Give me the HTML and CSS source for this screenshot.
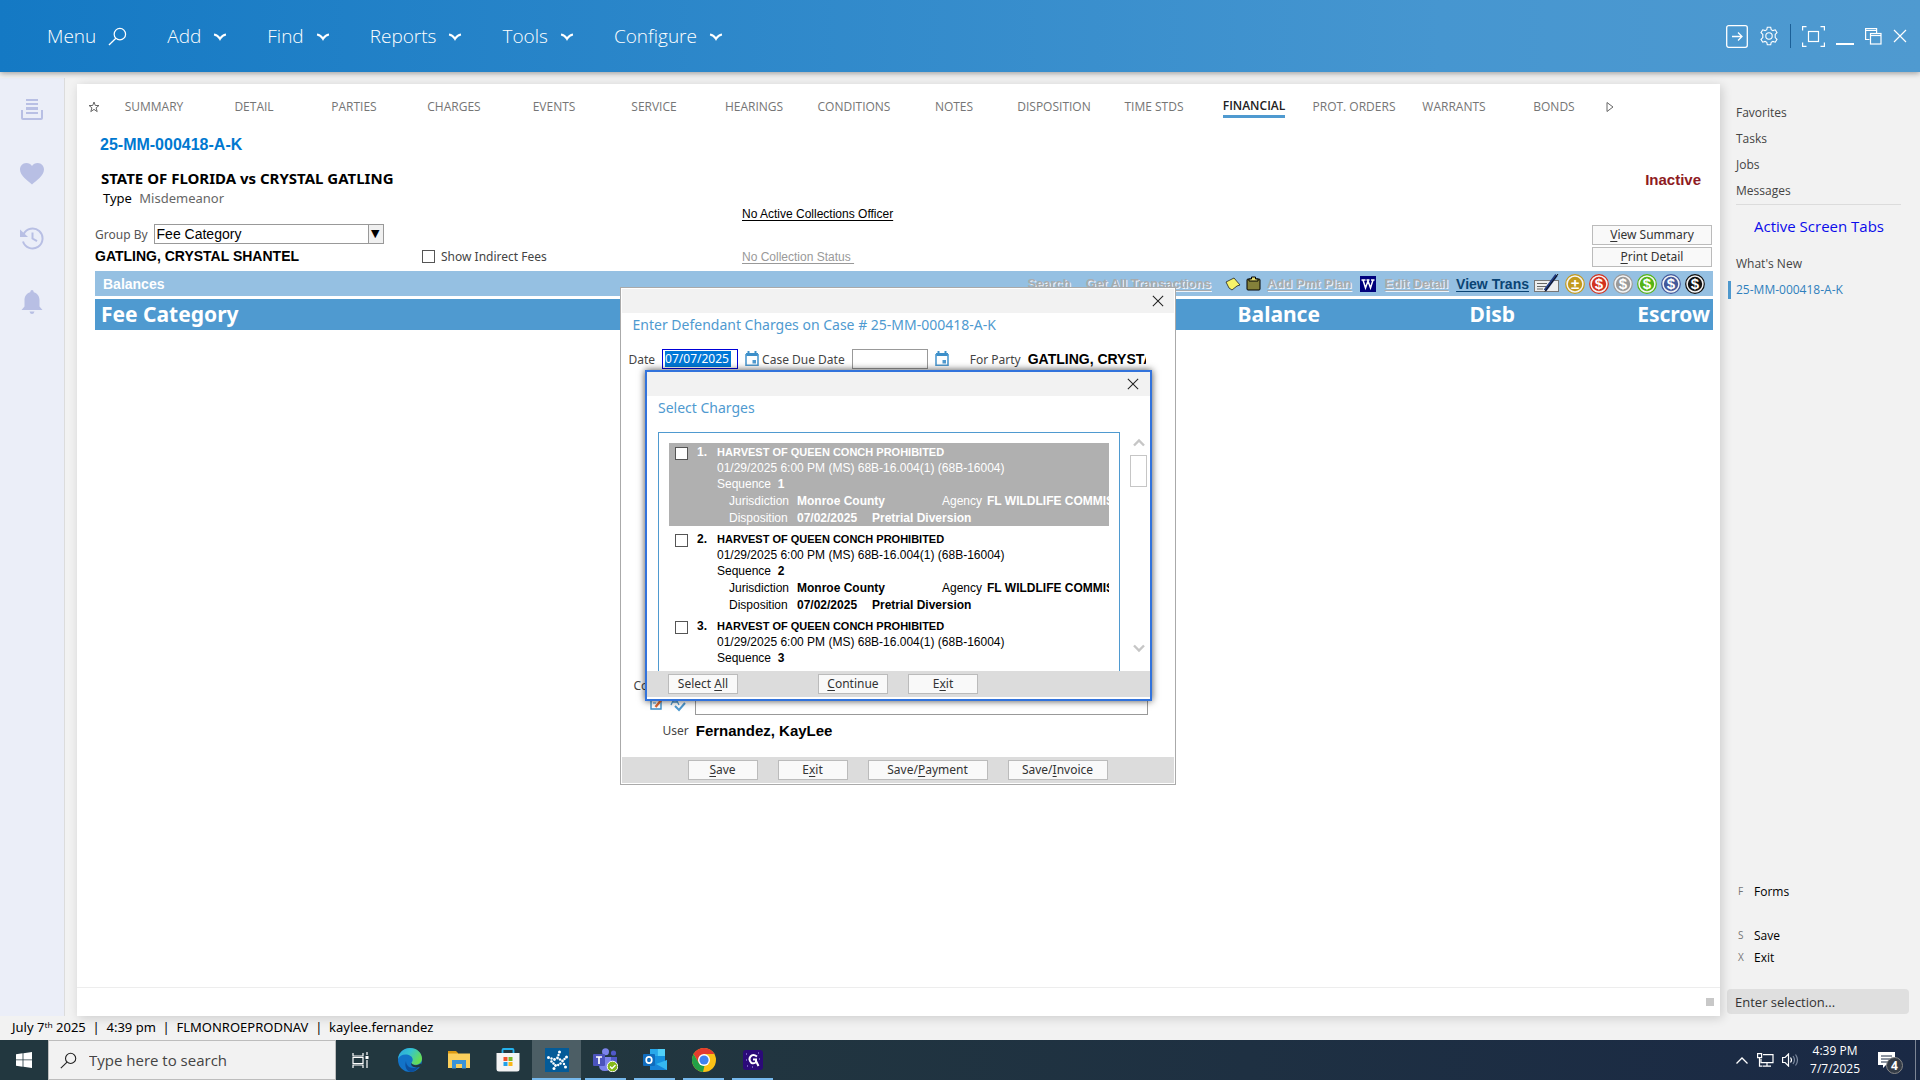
FILE: index.html
```html
<!DOCTYPE html>
<html lang="en">
<head>
    <meta charset="UTF-8">
    <meta name="viewport" content="width=device-width, initial-scale=1.0">
    <title>25-MM-000418-A-K - Financial</title>
    <link rel="stylesheet" href="styles.css">
</head>
<body>
    <!-- Shared icon shapes -->
    <svg class="sprite" aria-hidden="true">
        <symbol id="chevron" viewBox="0 0 14 14"><path d="M1 5.500c2.500.3 4.500 1.800 6 4.300c1.500-2.500 3.500-4 6-4.300" fill="none" stroke="currentColor" stroke-width="2.200"/></symbol>
        <symbol id="close" viewBox="0 0 14 14"><path d="M1 1l12 12M13 1L1 13" fill="none" stroke="currentColor" stroke-width="1.200"/></symbol>
        <symbol id="search" viewBox="0 0 20 20"><circle cx="12.500" cy="7.500" r="6" fill="none" stroke="currentColor" stroke-width="1.300"/><path d="M8.300 11.800L1 19" stroke="currentColor" stroke-width="1.300"/></symbol>
        <symbol id="calendar" viewBox="0 0 14 16"><path d="M1 2h12v3H1zM2.500 0h2v3h-2zM9.500 0h2v3h-2z" fill="#3d8fc9"/><path d="M1 3v11.200h12V3" fill="none" stroke="#4f9ad0" stroke-width="1.600"/><path d="M7.500 9h3.500v3.500H7.500z" fill="#4f9ad0"/></symbol>
        <symbol id="coin" viewBox="0 0 20 20"><circle cx="10" cy="10" r="9.300" fill="#f4f4f4" stroke="currentColor" stroke-width="1.200"/><circle cx="10" cy="10" r="7.200" fill="currentColor"/></symbol>
    </svg>

    <header class="topbar">
        <nav class="topmenu">
            <button class="menu-item">Menu <svg class="search-icon"><use href="#search"/></svg></button>
            <button class="menu-item">Add <svg class="chev"><use href="#chevron"/></svg></button>
            <button class="menu-item">Find <svg class="chev"><use href="#chevron"/></svg></button>
            <button class="menu-item">Reports <svg class="chev"><use href="#chevron"/></svg></button>
            <button class="menu-item">Tools <svg class="chev"><use href="#chevron"/></svg></button>
            <button class="menu-item">Configure <svg class="chev"><use href="#chevron"/></svg></button>
        </nav>
        <div class="window-tools">
            <button aria-label="Log out"><svg width="22" height="23" viewBox="0 0 22 23" fill="none" stroke="#fff" stroke-width="1.300"><rect x="0.700" y="0.700" width="20.600" height="21.600" rx="2"/><path d="M6 11.500h10M12 7.500l4 4l-4 4"/></svg></button>
            <button aria-label="Settings"><svg width="20" height="20" viewBox="0 0 20 20" fill="none" stroke="#fff" stroke-width="1.100"><circle cx="10" cy="10" r="3.200"/><path d="M8.300 1.200h3.400l.5 2.400l1.700 1l2.400-.8l1.700 2.900l-1.800 1.700v3.200l1.800 1.700l-1.700 2.900l-2.400-.8l-1.700 1l-.5 2.400H8.300l-.5-2.400l-1.700-1l-2.400.8L2 13.300l1.800-1.700V8.400L2 6.700l1.700-2.900l2.400.8l1.700-1z"/></svg></button>
            <span class="tool-divider"></span>
            <button aria-label="Focus mode"><svg width="23" height="21" viewBox="0 0 23 21" fill="none" stroke="#fff" stroke-width="1.200"><path d="M4.500.6H.6v4M18.500.6h3.900v4M.6 16.500v3.900h3.900M22.400 16.500v3.900h-3.900"/><rect x="6.500" y="5.500" width="10" height="10"/></svg></button>
            <button aria-label="Minimize"><svg width="18" height="20" viewBox="0 0 18 20"><path d="M0 18h18" stroke="#fff" stroke-width="2"/></svg></button>
            <button aria-label="Restore"><svg width="17" height="18" viewBox="0 0 17 18" fill="none" stroke="#fff" stroke-width="1.200"><path d="M4.500 12.500H.6V1.600h11V6M.6 3.500h11"/><rect x="5.500" y="6.500" width="10.500" height="10.500"/><path d="M5.500 8.500H16"/></svg></button>
            <button aria-label="Close"><svg class="close-icon"><use href="#close"/></svg></button>
        </div>
    </header>

    <div class="workspace">
        <aside class="rail">
            <button aria-label="Trays"><svg width="24" height="24" viewBox="0 0 24 24" fill="#b8bfe4"><path d="M6 1h12v2H6zM6 5h12v2H6zM6 9h12v3H6zM6 14h12v2H6z"/><path d="M1 12h2v8h18v-8h2v8q0 2-2 2H3q-2 0-2-2z"/></svg></button>
            <button aria-label="Favorites"><svg width="24" height="24" viewBox="0 0 24 24" fill="#b8bfe4"><path d="M12 22.500C8 19 0 13.500 0 7.500C0 4 2.500 1 6.300 1C8.700 1 10.900 2.200 12 4C13.100 2.200 15.300 1 17.700 1C21.500 1 24 4 24 7.500C24 13.500 16 19 12 22.500z"/></svg></button>
            <button aria-label="History"><svg width="24" height="24" viewBox="0 0 24 24" fill="none" stroke="#b8bfe4" stroke-width="2"><path d="M3.600 8A10 10 0 1 1 3 15.500M12.500 6.500v6l4.500 2.700"/><path d="M0 3.500l8 7.500H0z" fill="#b8bfe4" stroke="none"/></svg></button>
            <button aria-label="Alerts"><svg width="24" height="24" viewBox="0 0 24 24" fill="#b8bfe4"><path d="M12 0q1.500 0 1.800 2.200C18 3.500 19.500 7 19.500 10v6.500L22.500 20H1.500L4.500 16.500V10c0-3 1.500-6.500 5.700-7.800Q10.500 0 12 0zM9.500 21.500h5q-.6 2.500-2.500 2.500t-2.500-2.500z"/></svg></button>
        </aside>

        <main class="panel">
            <nav class="tabs">
                <button class="star" aria-label="Add to favorites"><svg width="12" height="12" viewBox="0 0 12 12" fill="none" stroke="#666"><path d="M6 1l1.300 3.500H11L8.100 6.800L9.200 10.600L6 8.400L2.800 10.600L3.900 6.800L1 4.500h3.700z"/></svg></button>
                <a href="#">SUMMARY</a>
                <a href="#">DETAIL</a>
                <a href="#">PARTIES</a>
                <a href="#">CHARGES</a>
                <a href="#">EVENTS</a>
                <a href="#">SERVICE</a>
                <a href="#">HEARINGS</a>
                <a href="#">CONDITIONS</a>
                <a href="#">NOTES</a>
                <a href="#">DISPOSITION</a>
                <a href="#">TIME STDS</a>
                <a href="#" class="active"><span>FINANCIAL</span></a>
                <a href="#">PROT. ORDERS</a>
                <a href="#">WARRANTS</a>
                <a href="#">BONDS</a>
                <button class="more" aria-label="More tabs"><svg width="8" height="12" viewBox="0 0 8 12"><path d="M1 1.500l6 4.500l-6 4.500z" fill="none" stroke="#666"/></svg></button>
            </nav>

            <section class="case">
                <h1>25-MM-000418-A-K</h1>
                <div class="style-row">
                    <h2>STATE OF FLORIDA vs CRYSTAL GATLING</h2>
                    <strong class="status">Inactive</strong>
                </div>
                <p class="type">Type <span>Misdemeanor</span></p>
                <div class="filters">
                    <div class="filters-left">
                        <div class="group-by">
                            <label for="groupBy">Group By</label>
                            <select id="groupBy"><option>Fee Category</option></select>
                        </div>
                        <div class="party-row">
                            <strong>GATLING, CRYSTAL SHANTEL</strong>
                            <label class="indirect"><input type="checkbox" class="tick"> Show Indirect Fees</label>
                        </div>
                    </div>
                    <div class="collections">
                        <a href="#">No Active Collections Officer</a>
                        <a href="#" class="muted">No Collection Status&nbsp;</a>
                    </div>
                    <div class="side-buttons">
                        <button class="btn"><u>V</u>iew Summary</button>
                        <button class="btn"><u>P</u>rint Detail</button>
                    </div>
                </div>

                <div class="balances">
                    <strong>Balances</strong>
                    <div class="actions">
                        <a href="#" class="off">Search</a>
                        <a href="#" class="off wide">Get All Transactions</a>
                        <svg width="16" height="14" viewBox="0 0 16 14"><path d="M1 5L9 1l6 7l-3 1l-5 4l-3-2z" fill="#f7f36a" stroke="#222" stroke-width=".8"/></svg>
                        <svg width="16" height="15" viewBox="0 0 16 15"><rect x="1" y="3" width="13" height="11" rx="1" fill="#84803a" stroke="#000"/><path d="M3 5V3h2.500V1h4v2H12v2z" fill="#e8e070" stroke="#000"/></svg>
                        <a href="#" class="off">Add Pmt Plan</a>
                        <svg class="word" width="16" height="16" viewBox="0 0 16 16"><rect width="16" height="16" fill="#00007b"/><path d="M1.500 4h4M6.500 4h3M11 4h3.500M3 4l2.500 8L8 5l2.500 7L13 4" fill="none" stroke="#fff" stroke-width="1.500"/></svg>
                        <a href="#" class="off">Edit Detail</a>
                        <a href="#" class="on">View Trans</a>
                        <svg class="check" width="26" height="20" viewBox="0 0 26 20"><rect x=".5" y="6.500" width="24" height="11" fill="#eee" stroke="#777"/><path d="M3 9.500h10M3 12.500h9M3 15h6" stroke="#666"/><path d="M22.500 1L11 16.500" stroke="#203a80" stroke-width="3"/><path d="M24 0L11 17.500" stroke="#111" stroke-width="1"/></svg>
                        <span class="coin gold"><svg><use href="#coin"/></svg><b>±</b></span>
                        <span class="coin red"><svg><use href="#coin"/></svg><b>$</b></span>
                        <span class="coin grey"><svg><use href="#coin"/></svg><b>$</b></span>
                        <span class="coin green"><svg><use href="#coin"/></svg><b>$</b></span>
                        <span class="coin blue"><svg><use href="#coin"/></svg><b>$</b></span>
                        <span class="coin black"><svg><use href="#coin"/></svg><b>$</b></span>
                    </div>
                </div>
                <table class="fees">
                    <thead>
                        <tr><th>Fee Category</th><th class="num">Balance</th><th class="num">Disb</th><th class="num">Escrow</th></tr>
                    </thead>
                </table>
            </section>

            <div class="panel-foot"><span class="grip"></span></div>

            <!-- Enter charges dialog -->
            <div class="overlay">
                <form class="dialog charges-dialog" role="dialog" aria-label="Enter Defendant Charges">
                    <div class="dialog-bar"><button type="button" aria-label="Close"><svg width="12" height="12"><use href="#close"/></svg></button></div>
                    <h3>Enter Defendant Charges on Case # 25-MM-000418-A-K</h3>
                    <div class="date-row">
                        <label for="chargeDate">Date</label>
                        <span class="date-box focused"><input id="chargeDate" type="text" value="07/07/2025"></span>
                        <svg width="14" height="16"><use href="#calendar"/></svg>
                        <label for="dueDate" class="due">Case Due Date</label>
                        <span class="date-box"><input id="dueDate" type="text"></span>
                        <svg width="14" height="16"><use href="#calendar"/></svg>
                        <span class="for-party">For Party</span>
                        <strong>GATLING, CRYSTAL SHANTEL</strong>
                    </div>
                    <div class="comment-row">
                        <div class="comment-side">
                            <label for="comments">Comments</label>
                            <div class="comment-tools">
                                <svg width="14" height="14" viewBox="0 0 14 14"><path d="M1 1h10v12H1z" fill="#fff" stroke="#3d8fc9" stroke-width="1.400"/><path d="M3 4h5M3 7h3" stroke="#3d8fc9"/><path d="M13 2L5.500 11" stroke="#dd6b35" stroke-width="2.400"/></svg>
                                <svg width="16" height="16" viewBox="0 0 16 16" fill="none" stroke="#4f9ad0"><path d="M1 9l4-8l4 8M2.500 6h5" stroke-width="1.300"/><path d="M5 10l4 4l6-7" stroke-width="2"/></svg>
                            </div>
                        </div>
                        <textarea id="comments"></textarea>
                    </div>
                    <div class="user-row"><span>User</span><strong>Fernandez, KayLee</strong></div>
                    <div class="dialog-foot">
                        <button type="button" class="btn"><u>S</u>ave</button>
                        <button type="button" class="btn">E<u>x</u>it</button>
                        <button type="button" class="btn w120">Save/<u>P</u>ayment</button>
                        <button type="button" class="btn w100">Save/<u>I</u>nvoice</button>
                    </div>
                </form>
            </div>

            <!-- Select charges dialog -->
            <div class="overlay front">
                <form class="dialog select-dialog" role="dialog" aria-label="Select Charges">
                    <div class="dialog-bar"><button type="button" aria-label="Close"><svg width="12" height="12"><use href="#close"/></svg></button></div>
                    <h3>Select Charges</h3>
                    <div class="list-row">
                        <ul class="charge-list">
                            <li class="charge selected">
                                <input type="checkbox" class="tick" id="c1">
                                <b>1.</b>
                                <div class="charge-body">
                                    <label for="c1">HARVEST OF QUEEN CONCH PROHIBITED</label>
                                    <p>01/29/2025 6:00 PM (MS) 68B-16.004(1) (68B-16004)</p>
                                    <p class="sequence">Sequence &nbsp;<b>1</b></p>
                                    <p class="info"><span>Jurisdiction</span><b class="county">Monroe County</b><span>Agency</span><b>FL WILDLIFE COMMISSION</b></p>
                                    <p class="info"><span>Disposition</span><b class="when">07/02/2025</b><b>Pretrial Diversion</b></p>
                                </div>
                            </li>
                            <li class="charge">
                                <input type="checkbox" class="tick" id="c2">
                                <b>2.</b>
                                <div class="charge-body">
                                    <label for="c2">HARVEST OF QUEEN CONCH PROHIBITED</label>
                                    <p>01/29/2025 6:00 PM (MS) 68B-16.004(1) (68B-16004)</p>
                                    <p class="sequence">Sequence &nbsp;<b>2</b></p>
                                    <p class="info"><span>Jurisdiction</span><b class="county">Monroe County</b><span>Agency</span><b>FL WILDLIFE COMMISSION</b></p>
                                    <p class="info"><span>Disposition</span><b class="when">07/02/2025</b><b>Pretrial Diversion</b></p>
                                </div>
                            </li>
                            <li class="charge">
                                <input type="checkbox" class="tick" id="c3">
                                <b>3.</b>
                                <div class="charge-body">
                                    <label for="c3">HARVEST OF QUEEN CONCH PROHIBITED</label>
                                    <p>01/29/2025 6:00 PM (MS) 68B-16.004(1) (68B-16004)</p>
                                    <p class="sequence">Sequence &nbsp;<b>3</b></p>
                                </div>
                            </li>
                        </ul>
                        <div class="scrollbar">
                            <svg width="12" height="9" viewBox="0 0 12 9"><path d="M1 7.500l5-5l5 5" fill="none" stroke="#c6c6c6" stroke-width="2.400"/></svg>
                            <span class="thumb"></span>
                            <svg class="down" width="12" height="9" viewBox="0 0 12 9"><path d="M1 1.500l5 5l5-5" fill="none" stroke="#c6c6c6" stroke-width="2.400"/></svg>
                        </div>
                    </div>
                    <div class="dialog-foot">
                        <button type="button" class="btn first">Select <u>A</u>ll</button>
                        <button type="button" class="btn"><u>C</u>ontinue</button>
                        <button type="button" class="btn">E<u>x</u>it</button>
                    </div>
                </form>
            </div>
        </main>

        <aside class="sidebar">
            <nav class="side-links">
                <a href="#">Favorites</a>
                <a href="#">Tasks</a>
                <a href="#">Jobs</a>
                <a href="#">Messages</a>
            </nav>
            <h2>Active Screen Tabs</h2>
            <nav class="screens">
                <a href="#">What's New</a>
                <a href="#" class="current">25-MM-000418-A-K</a>
            </nav>
            <div class="keys">
                <button class="forms"><span>F</span>Forms</button>
                <button><span>S</span>Save</button>
                <button><span>X</span>Exit</button>
            </div>
            <input type="text" class="selection" placeholder="Enter selection..." aria-label="Enter selection">
        </aside>
    </div>

    <div class="statusbar">July 7ᵗʰ 2025 &nbsp;|&nbsp; 4:39 pm &nbsp;|&nbsp; FLMONROEPRODNAV &nbsp;|&nbsp; kaylee.fernandez</div>

    <footer class="taskbar">
        <button class="start" aria-label="Start"><svg width="16" height="16" viewBox="0 0 16 16" fill="#fff"><path d="M0 2.200L6.600 1.300v6.200H0zM7.400 1.200L16 0v7.500H7.400zM0 8.300h6.600v6.400L0 13.800zM7.400 8.300H16V16l-8.600-1.200z"/></svg></button>
        <label class="task-search">
            <svg width="17" height="17"><use href="#search"/></svg>
            <input type="text" placeholder="Type here to search">
        </label>
        <button class="app" aria-label="Task View"><svg width="17" height="17" viewBox="0 0 17 17" fill="none" stroke="#fff" stroke-width="1.200"><path d="M1 1v3h10V1M1 16v-3h10v3M1 5.500h10v6H1zM15 0v3M15 8v8"/><path d="M13.500 4h3v3h-3z" fill="#fff" stroke="none"/></svg></button>
        <button class="app" aria-label="Edge"><svg width="24" height="24" viewBox="0 0 24 24">
            <defs>
                <linearGradient id="edgeTop" x1="0" y1="0" x2="1" y2=".5"><stop offset="0" stop-color="#2ba3e0"/><stop offset=".5" stop-color="#35c3d0"/><stop offset="1" stop-color="#66dd55"/></linearGradient>
            </defs>
            <circle cx="12" cy="12" r="12" fill="#1273c8"/>
            <path d="M0 11C.5 4.500 6 0 12 0c7 0 12 5 12 10.500c0 4-3 6.300-6.500 6.300c-2.500 0-4-1-4-1.800c0-.7 1.200-1.300 1.200-3.500C14.700 8.500 11 6.500 7.500 6.500C4 6.500 1 8.500 0 11z" fill="url(#edgeTop)"/>
            <path d="M8 13c0 6 6 9 13 5.500C19 22 15.500 24 12.500 24C9 23 6 19 8 13z" fill="#0c4f9d"/>
            <path d="M13.500 15c1 2.500 6 3 9 .5l1.500 2l-2.500 1.500c-5 1.500-9.500-1-8-4z" fill="#22373f"/></svg></button>
        <button class="app" aria-label="File Explorer"><svg width="22" height="20" viewBox="0 0 22 20"><path d="M0 1h8l2 2v3H0z" fill="#dc9a12"/><path d="M0 3.500h22V18H0z" fill="#fbcf5c"/><path d="M4 10h14v8.500h-4V14H8v4.500H4z" fill="#3a93d8"/></svg></button>
        <button class="app" aria-label="Store"><svg width="24" height="24" viewBox="0 0 24 24"><path d="M6.500 6V2q0-1 1-1h9q1 0 1 1v4" fill="none" stroke="#25b2ee" stroke-width="1.800"/><path d="M.5 5h23v16q0 2.500-2.500 2.500H3Q.5 23.500.5 21z" fill="#f4f4f4"/><path d="M7.500 9h4v4h-4z" fill="#f0512a"/><path d="M12.500 9h4v4h-4z" fill="#7db928"/><path d="M7.500 14h4v4h-4z" fill="#20a0e8"/><path d="M12.500 14h4v4h-4z" fill="#fab617"/></svg></button>
        <button class="app open current" aria-label="Case Manager"><svg width="24" height="24" viewBox="0 0 24 24"><rect width="24" height="24" fill="#045b98"/><g fill="#fff"><circle cx="14.500" cy="4" r="1.500"/><circle cx="13.500" cy="7" r="1.200"/><circle cx="12.500" cy="10" r="1.400"/><circle cx="3.500" cy="9.500" r="1.500"/><circle cx="6.500" cy="10.500" r="1.200"/><circle cx="9.500" cy="11.500" r="1.400"/><circle cx="15" cy="11.500" r="1.200"/><circle cx="17.500" cy="13" r="1.400"/><circle cx="19.500" cy="11" r="1.200"/><circle cx="21.500" cy="9" r="1.500"/><circle cx="6.500" cy="13.500" r="1.300"/><circle cx="8.500" cy="15.500" r="1.200"/><circle cx="10.500" cy="17.500" r="1.400"/><circle cx="9" cy="20.500" r="1.500"/><circle cx="15.500" cy="15.500" r="1.200"/><circle cx="13.200" cy="17" r="1.200"/><circle cx="19" cy="16" r="1.200"/><circle cx="20.500" cy="19" r="1.500"/></g></svg></button>
        <button class="app open" aria-label="Teams"><svg width="25" height="24" viewBox="0 0 25 24"><circle cx="12.500" cy="3.800" r="3.500" fill="#7b83eb"/><circle cx="20.500" cy="5" r="2.600" fill="#5059c9"/><path d="M16 9h8v7q0 4-4 4h-4z" fill="#5059c9"/><path d="M6 9h12v8q0 6-6 6t-6-6z" fill="#7b83eb"/><rect y="6" width="12" height="12" rx="1" fill="#4b53bc"/><path d="M3 9h6M6 9v7" stroke="#fff" stroke-width="1.700"/><circle cx="19.500" cy="18.500" r="5.300" fill="#85b91b" stroke="#fff"/><path d="M17 18.500l2 2l3.500-3.500" stroke="#fff" stroke-width="1.300" fill="none"/></svg></button>
        <button class="app open" aria-label="Outlook"><svg width="24" height="24" viewBox="0 0 24 24"><path d="M7 1h15v17H7z" fill="#1490df"/><path d="M14.500 1H22v7h-7.500z" fill="#50d0f8"/><path d="M7 1h7.500v7H7z" fill="#28a8ea"/><path d="M7 22V12l8.500 5.500L24 12v10z" fill="#1684d8"/><path d="M24 12v10L13 16z" fill="#35b8f1"/><rect y="6" width="12" height="12" rx="1" fill="#0f6cbd"/><ellipse cx="6" cy="12" rx="2.800" ry="3.200" fill="none" stroke="#fff" stroke-width="1.700"/></svg></button>
        <button class="app open" aria-label="Chrome"><svg width="24" height="24" viewBox="0 0 24 24"><circle cx="12" cy="12" r="12" fill="#fbc116"/><path d="M1.600 6A12 12 0 0 1 22.400 6H12L6.800 15z" fill="#e33b2e"/><path d="M1.600 6L6.800 15Q9 18 12.500 17.800L11 24A12 12 0 0 1 1.600 6z" fill="#23a047"/><circle cx="12" cy="12" r="6" fill="#fff"/><circle cx="12" cy="12" r="4.600" fill="#3f82f0"/></svg></button>
        <button class="app open" aria-label="Assistant"><svg width="20" height="20" viewBox="0 0 20 20"><rect width="20" height="20" rx="3" fill="#2b0a78"/><path d="M14 6.500Q10 3.500 7.500 6.500T8.500 13q3 1 4.500-1V9.500h-3M13 11l2.500 5" fill="none" stroke="#fff" stroke-width="2"/><path d="M3 4h1M15 3h1M4 16h1M16 9h1M3 10h1M9 17h1" stroke="#b9a5ff"/></svg></button>

        <div class="tray">
            <svg width="14" height="9" viewBox="0 0 14 9"><path d="M1.500 7.500l5.500-5.500l5.500 5.500" fill="none" stroke="#fff" stroke-width="1.300"/></svg>
            <svg width="17" height="14" viewBox="0 0 17 14" fill="none" stroke="#fff" stroke-width="1.200"><path d="M6 1.600h10v8H4V6M10 10v3M6 13.200h8M.6.600h4v4h-4zM2.500 5v8.200h3"/></svg>
            <svg width="17" height="14" viewBox="0 0 17 14" fill="none" stroke="#fff" stroke-width="1.200"><path d="M.6 4.500h2.500L6.500 1v12L3.100 9.500H.6z"/><path d="M8.500 4.500q2 2.500 0 5"/><path d="M11 3q3 4 0 8M13.500 1.500q4 5.500 0 11" stroke="#7d8aa0"/></svg>
            <div class="clock"><span>4:39 PM</span><span>7/7/2025</span></div>
            <div class="notes">
                <svg width="17" height="16" viewBox="0 0 17 16"><path d="M0 0h17v13H8l-3 3v-3H0z" fill="#fff"/><path d="M3 4h11M3 7h11M3 10h7" stroke="#1b2a45"/></svg>
                <span class="badge">4</span>
            </div>
            <span class="show-desktop"></span>
        </div>
    </footer>
</body>
</html>
```
FILE: styles.css
```css
/* General Reset */
* {
    margin: 0;
    padding: 0;
    box-sizing: border-box;
}

body {
    height: 100vh;
    display: flex;
    flex-direction: column;
    background: #f2f2f2;
    color: #000;
    font-family: "Noto Sans", Tahoma, sans-serif;
    font-size: 12px;
    overflow: hidden;
}

button,
input,
select,
textarea {
    font: inherit;
    color: inherit;
    border: none;
    background: none;
    outline: none;
}

a {
    color: inherit;
    text-decoration: none;
}

svg {
    display: block;
    flex: none;
}

.sprite {
    display: none;
}

/* Top bar */
.topbar {
    height: 72px;
    flex: none;
    display: flex;
    justify-content: space-between;
    align-items: center;
    padding: 0 13px 0 47px;
    background: linear-gradient(90deg, #1479c4, #4696d0 75%, #4f9ad0);
    box-shadow: 0 1px 6px rgba(0, 0, 0, 0.4);
    color: #fff;
    position: relative;
    z-index: 1;
}

.topmenu {
    display: flex;
    gap: 40px;
}

.menu-item {
    display: flex;
    align-items: center;
    gap: 12px;
    font-family: "Open Sans", "Noto Sans", sans-serif;
    font-size: 19px;
    font-weight: 300;
}

.chev,
.close-icon {
    width: 14px;
    height: 14px;
}

.search-icon {
    width: 19px;
    height: 19px;
}

.window-tools {
    display: flex;
    align-items: center;
    gap: 11px;
}

.tool-divider {
    width: 1px;
    height: 24px;
    background: #1b5f97;
}

/* Workspace */
.workspace {
    flex: 1;
    min-height: 0;
    display: grid;
    grid-template-columns: 65px 1fr 200px;
}

.rail {
    margin-top: 6px;
    padding-top: 20px;
    display: flex;
    flex-direction: column;
    align-items: center;
    gap: 40px;
    background: #ebeef8;
    border-right: 1px solid #dcdcdc;
}

.rail button {
    height: 24px;
}

.panel {
    position: relative;
    margin: 12px 0 0 12px;
    display: flex;
    flex-direction: column;
    background: #fff;
    box-shadow: 2px 2px 10px rgba(0, 0, 0, 0.16);
}

/* Tabs */
.tabs {
    display: flex;
    align-items: center;
    padding: 11px 0 0 11px;
    color: #757575;
    font-family: "Open Sans", "Noto Sans", sans-serif;
}

.tabs a {
    width: 100px;
    line-height: 21px;
    text-align: center;
}

.tabs .star {
    width: 16px;
}

.tabs .more {
    margin-left: 2px;
}

.tabs .active {
    color: #222;
    font-weight: 600;
}

.tabs .active span {
    display: inline-block;
    border-bottom: 3px solid #4f9ad0;
    line-height: 18px;
}

/* Case header */
.case {
    flex: 1;
    padding: 17px 7px 0 18px;
}

.case h1 {
    padding-left: 5px;
    color: #0078d0;
    font: bold 16px/20px "Liberation Sans", Arial, sans-serif;
}

.style-row {
    display: flex;
    justify-content: space-between;
    margin-top: 12px;
    padding: 0 12px 0 6px;
}

.style-row h2 {
    font-size: 15px;
    line-height: 22px;
}

.status {
    color: #8e1b22;
    font: bold 15px/25px "Liberation Sans", Arial, sans-serif;
}

.type {
    padding-left: 8px;
    font-size: 13px;
    line-height: 12px;
    margin-bottom: 2px;
}

.type span {
    margin-left: 4px;
    color: #666;
}

.filters {
    display: flex;
    align-items: flex-end;
    padding-bottom: 3px;
}

.filters-left {
    width: 647px;
}

.group-by {
    position: relative;
    display: flex;
    align-items: center;
    gap: 6px;
    color: #555;
}

.group-by select {
    width: 230px;
    height: 20px;
    padding-left: 2px;
    appearance: none;
    border: 1px solid #999;
    border-radius: 0;
    color: #000;
    font: 14px "Liberation Sans", Arial, sans-serif;
    background: linear-gradient(90deg, #999 1px, #f0f0f0 1px) right / 15px 100% no-repeat;
}

/* Drop-down arrow over the select */
.group-by::after {
    content: "▼";
    position: absolute;
    left: 276px;
    top: 0;
    font: 11px/20px "DejaVu Sans", sans-serif;
    color: #000;
    pointer-events: none;
}

.party-row {
    display: flex;
    align-items: center;
    height: 24px;
}

.party-row strong {
    width: 327px;
    font: bold 14px "Liberation Sans", Arial, sans-serif;
}

.indirect {
    display: flex;
    align-items: center;
    gap: 6px;
    color: #444;
}

.tick {
    width: 13px;
    height: 13px;
    flex: none;
    appearance: none;
    border: 1px solid #555;
    background: #fff;
}

.collections {
    flex: 1;
    display: flex;
    flex-direction: column;
    align-items: flex-start;
    gap: 27px;
    padding-bottom: 3px;
    font: 12px/16px "Liberation Sans", Arial, sans-serif;
}

.collections a {
    text-decoration: underline;
    text-underline-offset: 2px;
}

.collections .muted {
    color: #999;
}

.side-buttons {
    display: flex;
    flex-direction: column;
    gap: 2px;
    width: 120px;
    margin: 0 1px 1px 0;
}

.btn {
    height: 20px;
    min-width: 70px;
    border: 1px solid #bbb;
    background: #f9f9f9;
    color: #333;
    line-height: 18px;
    text-align: center;
}

.btn u {
    text-underline-offset: 2px;
}

/* Balances */
.balances {
    display: flex;
    justify-content: space-between;
    align-items: center;
    height: 25px;
    margin-bottom: 3px;
    padding: 0 9px 0 8px;
    background: #95c0e2;
    color: #fff;
    font: bold 14px "Liberation Sans", Arial, sans-serif;
}

.actions {
    display: flex;
    align-items: center;
    gap: 5px;
}

.actions a {
    text-decoration: underline;
    text-underline-offset: 2px;
    margin-right: 3px;
}

.actions .off {
    color: #a9abad;
    font-size: 13px;
    text-shadow: 1px 1px 0 #eef4fa;
}

.actions .wide {
    margin: 0 9px 0 7px;
}

.actions .word {
    margin-right: 4px;
}

.actions .on {
    margin: 0;
    color: #0a4474;
}

.coin {
    display: grid;
    place-items: center;
    width: 19px;
    height: 20px;
}

.coin svg,
.coin b {
    grid-area: 1 / 1;
    width: 20px;
    text-align: center;
}

.coin svg {
    height: 20px;
}

.coin b {
    color: #fff;
    font-size: 15px;
    line-height: 20px;
}

.gold { color: #c39a1c; }
.red { color: #d3321f; }
.grey { color: #9a9a9a; }
.green { color: #55b414; }
.blue { color: #44599c; }
.black { color: #111; }

.fees {
    width: 100%;
    border-collapse: collapse;
    background: #4f9ad0;
    color: #fff;
    font-size: 21px;
}

.fees th {
    width: 195px;
    height: 31px;
    padding: 0 3px 0 6px;
    line-height: 31px;
    text-align: left;
}

.fees th:first-child {
    width: auto;
}

.fees .num {
    text-align: right;
}

.panel-foot {
    display: flex;
    justify-content: flex-end;
    align-items: center;
    height: 29px;
    padding-right: 6px;
    border-top: 1px solid #ededed;
}

.grip {
    width: 8px;
    height: 8px;
    background: #c8c8c8;
}

/* Dialogs */
.overlay {
    position: absolute;
    inset: 0;
    display: flex;
    justify-content: center;
    align-items: flex-start;
    padding: 203px 2px 0 0;
}

.overlay.front {
    padding: 286px 0 0;
}

.dialog {
    display: flex;
    flex-direction: column;
    background: #fff;
    color: #444;
}

.charges-dialog {
    width: 556px;
    height: 498px;
    padding: 1px;
    border: 1px solid #aaa;
}

.select-dialog {
    width: 507px;
    height: 331px;
    border: 2px solid #3273dc;
    box-shadow: 0 0 7px rgba(0, 0, 0, 0.7);
}

.dialog-bar {
    display: flex;
    justify-content: flex-end;
    align-items: center;
    height: 24px;
    flex: none;
    padding-right: 10px;
    background: #f2f2f2;
    color: #222;
}

.dialog h3 {
    padding: 0 11px;
    color: #4f9ad0;
    font-size: 14px;
    font-weight: normal;
    line-height: 24px;
}

.date-row {
    display: flex;
    align-items: center;
    height: 20px;
    margin: 12px 28px 0 7px;
    gap: 7px;
    white-space: nowrap;
    overflow: hidden;
}

.date-box {
    width: 76px;
    height: 20px;
    flex: none;
    padding: 1px 2px;
    border: 1px solid #999;
}

.date-box input {
    display: block;
    width: 66px;
    height: 16px;
    line-height: 16px;
}

.date-box.focused {
    border-color: #0000d8;
}

.date-box.focused input {
    background: #0078d7;
    color: #fff;
}

.date-row strong {
    color: #000;
    font: bold 14px "Liberation Sans", Arial, sans-serif;
}

.date-row .due {
    margin-left: -4px;
}

.for-party {
    margin-left: 14px;
}

.comment-row {
    display: flex;
    margin: 20px 26px 0 12px;
    flex: 1;
}

.comment-side {
    width: 61px;
    display: flex;
    flex-direction: column;
    justify-content: flex-end;
    padding-bottom: 3px;
    gap: 2px;
}

.comment-tools {
    display: flex;
    gap: 6px;
    padding-left: 16px;
}

.comment-row textarea {
    flex: 1;
    border: 1px solid #999;
    resize: none;
}

.user-row {
    display: flex;
    gap: 7px;
    align-items: center;
    height: 30px;
    margin-bottom: 12px;
    padding-left: 41px;
}

.user-row strong {
    color: #000;
    font: bold 15px "Liberation Sans", Arial, sans-serif;
}

.dialog-foot {
    display: flex;
    align-items: center;
    justify-content: center;
    gap: 20px;
    height: 26px;
    flex: none;
    background: #dcdcdc;
}

.w120 {
    width: 120px;
}

.w100 {
    width: 100px;
}

/* Charge list */
.list-row {
    flex: 1;
    min-height: 0;
    display: flex;
    justify-content: space-between;
    margin-top: 12px;
    padding: 0 3px 0 11px;
}

.charge-list {
    width: 462px;
    padding: 10px;
    border: 1px solid #4f9ad0;
    border-bottom: none;
    list-style: none;
    overflow: hidden;
}

.charge {
    display: flex;
    height: 83px;
    margin-bottom: 4px;
    padding: 0 0 0 6px;
    color: #000;
    font: 12px/16px "Liberation Sans", Arial, sans-serif;
    overflow: hidden;
}

.charge .tick {
    margin: 4px 9px 0 0;
}

.charge > b {
    width: 20px;
}

.charge > b,
.charge-body {
    padding-top: 1px;
}

.charge.selected {
    background: #b0b0b0;
    color: #fff;
}

.charge-body {
    flex: 1;
    min-width: 0;
    white-space: nowrap;
}

.charge label {
    display: block;
    font-size: 11px;
    font-weight: bold;
}

.sequence {
    margin-bottom: 1px;
}

.info {
    display: flex;
    gap: 5px;
    padding-left: 12px;
    line-height: 17px;
}

.info span,
.info b {
    flex: none;
}

.info span:first-child {
    width: 63px;
}

.county {
    width: 140px;
}

.when {
    width: 70px;
}

.scrollbar {
    width: 17px;
    display: flex;
    flex-direction: column;
    align-items: center;
    padding: 6px 0 18px;
}

.thumb {
    width: 17px;
    height: 32px;
    margin-top: 8px;
    border: 1px solid #c6c6c6;
}

.scrollbar .down {
    margin-top: auto;
}

.select-dialog .dialog-bar {
    padding-right: 11px;
}

.select-dialog .dialog-foot {
    justify-content: flex-start;
    padding-left: 21px;
    margin-bottom: 2px;
}

.select-dialog .first {
    margin-right: 60px;
}

/* Right sidebar */
.sidebar {
    display: flex;
    flex-direction: column;
    padding: 28px 11px 2px 7px;
    color: #444;
    font-family: "Open Sans", "Noto Sans", sans-serif;
}

.side-links {
    display: flex;
    flex-direction: column;
    margin: 0 8px 0 9px;
    line-height: 26px;
    border-bottom: 1px solid #dcdcdc;
}

.sidebar h2 {
    margin: 8px 0 16px 27px;
    color: #0b0bea;
    font-size: 15px;
    font-weight: normal;
    line-height: 26px;
}

.screens {
    display: flex;
    flex-direction: column;
    line-height: 18px;
    gap: 8px;
    padding-left: 1px;
}

.screens a {
    padding-left: 5px;
    border-left: 3px solid transparent;
}

.screens .current {
    color: #2f80bd;
    border-color: #4f9ad0;
}

.keys {
    margin-top: auto;
    display: flex;
    flex-direction: column;
    align-items: flex-start;
    padding: 0 0 21px 11px;
    color: #000;
}

.keys button {
    display: flex;
    align-items: center;
    height: 22px;
}

.keys span {
    width: 16px;
    color: #777;
    font-size: 10px;
    text-align: left;
}

.keys .forms {
    margin-bottom: 22px;
}

.selection {
    height: 25px;
    padding: 0 8px;
    border-radius: 4px;
    background: #dfdfdf;
    font-size: 13px;
}

.selection::placeholder {
    color: #333;
    opacity: 1;
}

/* Status bar */
.statusbar {
    height: 24px;
    flex: none;
    padding-left: 12px;
    line-height: 22px;
    font-size: 13px;
}

/* Taskbar */
.taskbar {
    height: 40px;
    flex: none;
    display: flex;
    background: linear-gradient(90deg, #22373f 30%, #1a2945);
    color: #fff;
}

.start {
    width: 48px;
    display: grid;
    place-items: center;
}

.task-search {
    display: flex;
    align-items: center;
    gap: 12px;
    width: 288px;
    padding-left: 11px;
    border: 1px solid #bdbdbd;
    background: #f2f2f2;
    color: #222;
    font-family: "Open Sans", "Noto Sans", sans-serif;
    font-size: 15px;
}

.task-search input::placeholder {
    color: #444;
    opacity: 1;
}

.app {
    width: 49px;
    display: grid;
    place-items: center;
    padding-top: 2px;
    border-bottom: 2px solid transparent;
}

.app.open {
    width: 41px;
    margin: 0 4px;
    border-color: #76b9ed;
}

.app.current {
    width: 49px;
    margin: 0;
    background: #4c5e65;
}

.tray {
    margin-left: auto;
    display: flex;
    align-items: center;
    gap: 8px;
}

.clock {
    display: flex;
    flex-direction: column;
    align-items: center;
    margin: 0 3px;
    font-family: "Open Sans", "Noto Sans", sans-serif;
    line-height: 18px;
}

.notes {
    position: relative;
    width: 36px;
    padding-left: 7px;
}

.badge {
    position: absolute;
    left: 15px;
    top: 5px;
    width: 17px;
    height: 17px;
    border: 1px solid #888;
    border-radius: 50%;
    background: #333b46;
    font-weight: bold;
    line-height: 15px;
    text-align: center;
}

.show-desktop {
    width: 5px;
    height: 40px;
    border-left: 1px solid #7c8595;
}
```
